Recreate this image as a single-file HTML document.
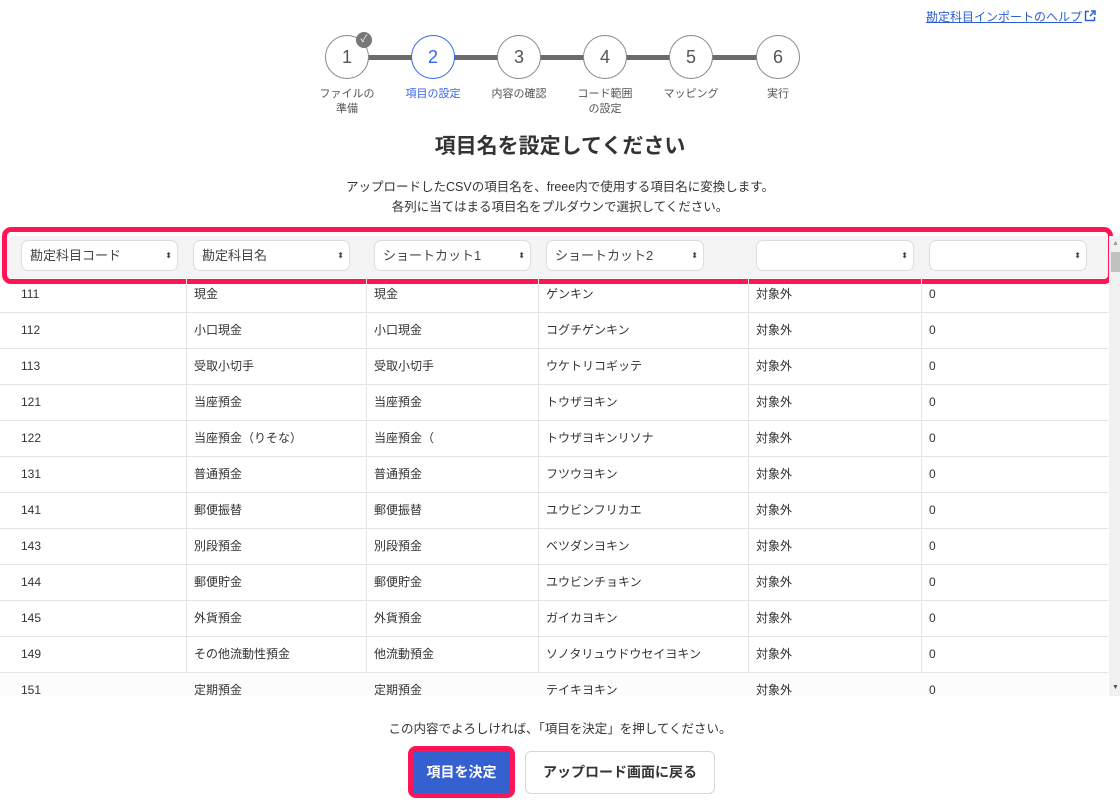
<!DOCTYPE html>
<html><head><meta charset="utf-8"><style>
*{box-sizing:border-box;margin:0;padding:0}
body{width:1120px;height:804px;overflow:hidden;background:#fff;font-family:"Liberation Sans","Noto Sans CJK JP",sans-serif;color:#333;position:relative}
.a{position:absolute}
.help{right:24px;top:8px;font-size:12px;color:#2d5fd6;text-decoration:underline}
.c{width:44px;height:44px;border-radius:50%;border:1px solid #888;background:#fff;text-align:center;line-height:42px;font-size:18px;color:#555;top:35px}
.lab{font-size:11px;color:#555;text-align:center;width:90px;top:87px;line-height:15px}
.line{top:55px;height:5px;background:#6b6b6b}
.sel{height:31px;top:240px;border:1px solid #ddd;border-radius:7px;background:#fff;font-size:13px;color:#444;padding-left:8px;line-height:29px}
.sel:after{content:"⬍";position:absolute;right:5px;top:0;font-size:8px;color:#444}
.row{left:0;width:1108px;height:36px;border-bottom:1px solid #e4e4e4;font-size:12px;color:#333}
.row span{position:absolute;top:0;height:34px;line-height:34px;display:flex;align-items:center}
.vl{top:278px;width:1px;height:418px;background:#e4e4e4}
</style></head><body>
<div class="a help">勘定科目インポートのヘルプ<svg width="12" height="12" viewBox="0 0 12 12" style="vertical-align:-1px;margin-left:2px"><path d="M5 1.5H1.5v9h9V7" fill="none" stroke="#2d5fd6" stroke-width="1.5"/><path d="M6 6l4.5-4.5M7 1h4v4" fill="none" stroke="#2d5fd6" stroke-width="1.5"/></svg></div>

<div class="a line" style="left:368px;width:390px"></div>
<div class="a c" style="left:325px">1</div>
<div class="a" style="left:356px;top:32px;width:16px;height:16px;border-radius:50%;background:#777;color:#fff;font-size:10px;text-align:center;line-height:16px">✓</div>
<div class="a c" style="left:411px;border-color:#3366ee;color:#3366ee">2</div>
<div class="a c" style="left:497px">3</div>
<div class="a c" style="left:583px">4</div>
<div class="a c" style="left:669px">5</div>
<div class="a c" style="left:756px">6</div>
<div class="a lab" style="left:302px">ファイルの<br>準備</div>
<div class="a lab" style="left:388px;color:#3366ee">項目の設定</div>
<div class="a lab" style="left:474px">内容の確認</div>
<div class="a lab" style="left:560px">コード範囲<br>の設定</div>
<div class="a lab" style="left:646px">マッピング</div>
<div class="a lab" style="left:733px">実行</div>

<div class="a" style="left:0;width:1120px;top:130px;text-align:center;font-size:21px;font-weight:bold;color:#333">項目名を設定してください</div>
<div class="a" style="left:0;width:1120px;top:177px;text-align:center;font-size:12.5px;line-height:20px;color:#333">アップロードしたCSVの項目名を、freee内で使用する項目名に変換します。<br>各列に当てはまる項目名をプルダウンで選択してください。</div>

<div class="a" style="left:0;top:236px;width:1108px;height:42px;background:#f5f4f5"></div>
<div class="a sel" style="left:21px;width:157px">勘定科目コード</div>
<div class="a sel" style="left:193px;width:157px">勘定科目名</div>
<div class="a sel" style="left:374px;width:157px">ショートカット1</div>
<div class="a sel" style="left:546px;width:158px">ショートカット2</div>
<div class="a sel" style="left:756px;width:158px"></div>
<div class="a sel" style="left:929px;width:158px"></div>
<div class="a" style="left:2px;top:227px;width:1111px;height:57px;border:5px solid #ff1456;border-radius:9px"></div>

<div class="a" style="left:1109px;top:236px;width:11px;height:460px;background:#f1f1f1"></div>
<div class="a" style="left:1111px;top:252px;width:9px;height:20px;background:#c1c1c1"></div>
<div class="a" style="left:1112px;top:240px;font-size:7px;color:#999">▲</div>
<div class="a" style="left:1112px;top:684px;font-size:7px;color:#555">▼</div>

<div class="a vl" style="left:186px"></div><div class="a vl" style="left:366px"></div><div class="a vl" style="left:538px"></div><div class="a vl" style="left:748px"></div><div class="a vl" style="left:921px"></div>

<div class="a row" style="top:277px"><span style="left:21px">111</span><span style="left:194px">現金</span><span style="left:374px">現金</span><span style="left:546px">ゲンキン</span><span style="left:756px">対象外</span><span style="left:929px">0</span></div>
<div class="a row" style="top:313px"><span style="left:21px">112</span><span style="left:194px">小口現金</span><span style="left:374px">小口現金</span><span style="left:546px">コグチゲンキン</span><span style="left:756px">対象外</span><span style="left:929px">0</span></div>
<div class="a row" style="top:349px"><span style="left:21px">113</span><span style="left:194px">受取小切手</span><span style="left:374px">受取小切手</span><span style="left:546px">ウケトリコギッテ</span><span style="left:756px">対象外</span><span style="left:929px">0</span></div>
<div class="a row" style="top:385px"><span style="left:21px">121</span><span style="left:194px">当座預金</span><span style="left:374px">当座預金</span><span style="left:546px">トウザヨキン</span><span style="left:756px">対象外</span><span style="left:929px">0</span></div>
<div class="a row" style="top:421px"><span style="left:21px">122</span><span style="left:194px">当座預金（りそな）</span><span style="left:374px">当座預金（</span><span style="left:546px">トウザヨキンリソナ</span><span style="left:756px">対象外</span><span style="left:929px">0</span></div>
<div class="a row" style="top:457px"><span style="left:21px">131</span><span style="left:194px">普通預金</span><span style="left:374px">普通預金</span><span style="left:546px">フツウヨキン</span><span style="left:756px">対象外</span><span style="left:929px">0</span></div>
<div class="a row" style="top:493px"><span style="left:21px">141</span><span style="left:194px">郵便振替</span><span style="left:374px">郵便振替</span><span style="left:546px">ユウビンフリカエ</span><span style="left:756px">対象外</span><span style="left:929px">0</span></div>
<div class="a row" style="top:529px"><span style="left:21px">143</span><span style="left:194px">別段預金</span><span style="left:374px">別段預金</span><span style="left:546px">ベツダンヨキン</span><span style="left:756px">対象外</span><span style="left:929px">0</span></div>
<div class="a row" style="top:565px"><span style="left:21px">144</span><span style="left:194px">郵便貯金</span><span style="left:374px">郵便貯金</span><span style="left:546px">ユウビンチョキン</span><span style="left:756px">対象外</span><span style="left:929px">0</span></div>
<div class="a row" style="top:601px"><span style="left:21px">145</span><span style="left:194px">外貨預金</span><span style="left:374px">外貨預金</span><span style="left:546px">ガイカヨキン</span><span style="left:756px">対象外</span><span style="left:929px">0</span></div>
<div class="a row" style="top:637px"><span style="left:21px">149</span><span style="left:194px">その他流動性預金</span><span style="left:374px">他流動預金</span><span style="left:546px">ソノタリュウドウセイヨキン</span><span style="left:756px">対象外</span><span style="left:929px">0</span></div>
<div class="a row" style="top:673px;height:23px;border:none;overflow:hidden;background:#fcfcfc"><span style="left:21px">151</span><span style="left:194px">定期預金</span><span style="left:374px">定期預金</span><span style="left:546px">テイキヨキン</span><span style="left:756px">対象外</span><span style="left:929px">0</span></div>

<div class="a" style="left:0;width:1120px;top:718px;text-align:center;font-size:12.5px;color:#333">この内容でよろしければ、「項目を決定」を押してください。</div>
<div class="a" style="left:408px;top:746px;width:107px;height:52px;background:#ff1456;border-radius:8px"></div>
<div class="a" style="left:413px;top:751px;width:97px;height:42px;background:#3560d0;color:#fff;font-weight:bold;font-size:14px;text-align:center;line-height:42px">項目を決定</div>
<div class="a" style="left:525px;top:751px;width:190px;height:43px;border:1px solid #d8d8d8;border-radius:6px;background:#fff;color:#333;font-weight:bold;font-size:14px;text-align:center;line-height:41px">アップロード画面に戻る</div>
</body></html>
